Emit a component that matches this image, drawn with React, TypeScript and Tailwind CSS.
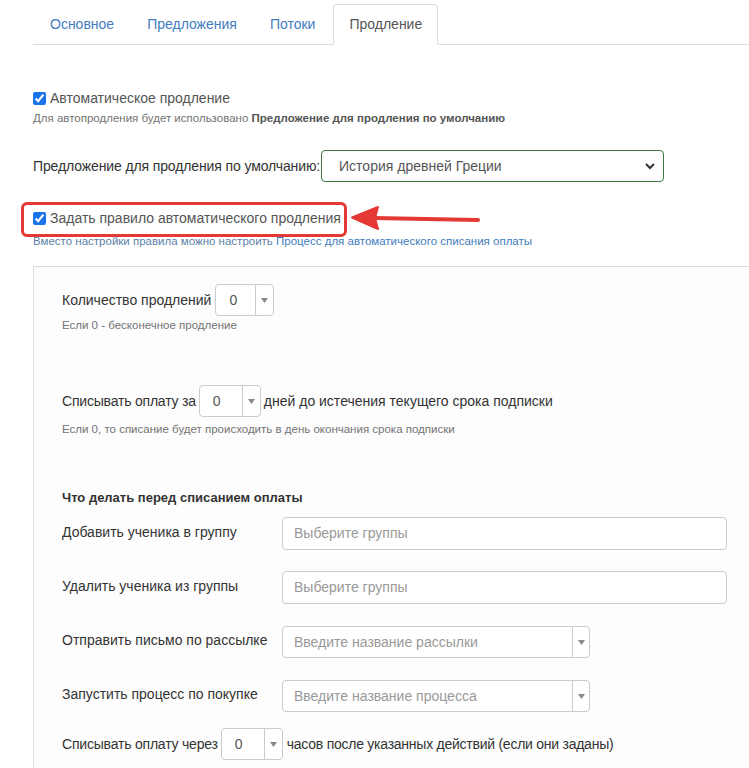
import React from "react";

const font = { fontFamily: '"Liberation Sans", Arial, sans-serif' };

function Caret() {
  return (
    <svg width="7" height="5" viewBox="0 0 7 5" className="block">
      <path d="M0 0 L7 0 L3.5 5 Z" fill="#888" />
    </svg>
  );
}

function NumberSelect({ width }: { width: string }) {
  return (
    <div className={`flex h-[32px] ${width} shrink-0 items-stretch rounded-[4px] border border-[#ccc] bg-white`}>
      <div className="flex flex-1 items-center pl-[13px] text-[14px] text-[#555]">0</div>
      <div className="flex w-[18px] items-center justify-center border-l border-[#ccc]">
        <Caret />
      </div>
    </div>
  );
}

function TextField({ placeholder }: { placeholder: string }) {
  return (
    <div className="flex h-[33px] w-[445px] items-center rounded-[4px] border border-[#ccc] bg-white pl-[11px] text-[14px] text-[#999]">
      {placeholder}
    </div>
  );
}

function ComboField({ placeholder }: { placeholder: string }) {
  return (
    <div className="flex h-[32px] w-[308px] items-stretch rounded-[4px] border border-[#ccc] bg-white">
      <div className="flex flex-1 items-center pl-[11px] text-[14px] text-[#999]">{placeholder}</div>
      <div className="flex w-[17px] items-center justify-center border-l border-[#ccc]">
        <Caret />
      </div>
    </div>
  );
}

function Row({ label, children, mt }: { label: string; children: React.ReactNode; mt: string }) {
  return (
    <div className={`flex items-center ${mt}`}>
      <div className="-mt-[3px] w-[220px] shrink-0 text-[14px] text-[#333]">{label}</div>
      {children}
    </div>
  );
}

export default function App() {
  const tabs = ["Основное", "Предложения", "Потоки", "Продление"];

  return (
    <div className="relative h-[768px] w-[749px] overflow-hidden bg-white" style={font}>
      {/* tabs */}
      <div className="ml-[33px] mt-[4px] flex h-[41px] border-b border-[#ddd]">
        {tabs.map((t, i) => {
          const active = i === tabs.length - 1;
          return (
            <div
              key={t}
              className={
                active
                  ? "-mb-px ml-[2px] flex items-center rounded-t-[4px] border border-[#ddd] border-b-white bg-white px-[15px] text-[14px] text-[#555]"
                  : "ml-[2px] mr-[1px] flex items-center px-[15px] text-[14px] text-[#3f7cc0]"
              }
            >
              {t}
            </div>
          );
        })}
      </div>

      <div className="pl-[33px]">
        {/* auto renewal */}
        <div className="mt-[43px] flex h-[20px] items-center">
          <input type="checkbox" checked readOnly className="mr-[4px] h-[13px] w-[13px] accent-[#1a73e8]" />
          <span className="text-[14px] text-[#555]">Автоматическое продление</span>
        </div>
        <div className="mt-[3px] text-[11.5px] leading-[14px] text-[#737373]">
          Для автопродления будет использовано{" "}
          <b className="font-bold text-[#555]">Предложение для продления по умолчанию</b>
        </div>

        <div className="mt-[25px] flex items-center">
          <span className="text-[14px] tracking-[-0.12px] text-[#333]">Предложение для продления по умолчанию:</span>
          <div className="ml-[1px] flex h-[32px] w-[343px] items-center justify-between rounded-[4px] border border-[#3c763d] bg-white pl-[17px] pr-[8px] text-[14px] text-[#555]">
            <span>История древней Греции</span>
            <svg width="10" height="7" viewBox="0 0 10 7">
              <path d="M1 1 L5 5 L9 1" fill="none" stroke="#333" strokeWidth="2" />
            </svg>
          </div>
        </div>

        {/* highlighted rule checkbox */}
        <div className="relative mt-[26px] flex h-[20px] items-center">
          <span className="pointer-events-none absolute left-[-12px] top-[-6px] h-[35px] w-[326px] rounded-[6px] border-[3px] border-[#e53935]" />
          <input type="checkbox" checked readOnly className="mr-[4px] h-[13px] w-[13px] accent-[#1a73e8]" />
          <span className="text-[14px] text-[#555]">Задать правило автоматического продления</span>
        </div>
        <div className="mt-[6px] text-[11.5px] leading-[14px] text-[#5b7fa6]">
          Вместо настройки правила можно настроить{" "}
          <span className="text-[#3f7cc0]">Процесс для автоматического списания оплаты</span>
        </div>

        {/* rule panel */}
        <div className="mt-[18px] h-[520px] w-[740px] border border-[#ddd] bg-[#fdfdfd] pl-[28px] pt-[17px]">
          <div className="flex items-center">
            <span className="mr-[4px] text-[14px] text-[#333]">Количество продлений</span>
            <NumberSelect width="w-[59px]" />
          </div>
          <div className="mt-[2px] text-[11.5px] leading-[14px] text-[#737373]">Если 0 - бесконечное продление</div>

          <div className="mt-[53px] flex items-center">
            <span className="mr-[3px] text-[14px] tracking-[-0.2px] text-[#333]">Списывать оплату за</span>
            <NumberSelect width="w-[62px]" />
            <span className="ml-[3px] text-[14px] text-[#333]">дней до истечения текущего срока подписки</span>
          </div>
          <div className="mt-[5px] text-[11.5px] leading-[14px] text-[#737373]">
            Если 0, то списание будет происходить в день окончания срока подписки
          </div>

          <div className="mt-[53px] text-[13px] font-bold leading-[18px] text-[#333]">Что делать перед списанием оплаты</div>

          <Row label="Добавить ученика в группу" mt="mt-[10px]">
            <TextField placeholder="Выберите группы" />
          </Row>
          <Row label="Удалить ученика из группы" mt="mt-[21px]">
            <TextField placeholder="Выберите группы" />
          </Row>
          <Row label="Отправить письмо по рассылке" mt="mt-[22px]">
            <ComboField placeholder="Введите название рассылки" />
          </Row>
          <Row label="Запустить процесс по покупке" mt="mt-[22px]">
            <ComboField placeholder="Введите название процесса" />
          </Row>

          <div className="mt-[16px] flex items-center">
            <span className="mr-[3px] text-[14px] tracking-[-0.2px] text-[#333]">Списывать оплату через</span>
            <NumberSelect width="w-[62px]" />
            <span className="ml-[4px] text-[14px] tracking-[-0.25px] text-[#333]">часов после указанных действий (если они заданы)</span>
          </div>
        </div>
      </div>

      {/* annotation arrow */}
      <svg className="pointer-events-none absolute left-[348px] top-[203px]" width="136" height="32" viewBox="0 0 136 32">
        <path d="M130 17 L26 15" stroke="#e53935" strokeWidth="4" strokeLinecap="round" fill="none" />
        <path d="M4 14.5 L30 4 L27 15 L30 26 Z" fill="#e53935" stroke="#e53935" strokeWidth="2" strokeLinejoin="round" />
      </svg>
    </div>
  );
}
